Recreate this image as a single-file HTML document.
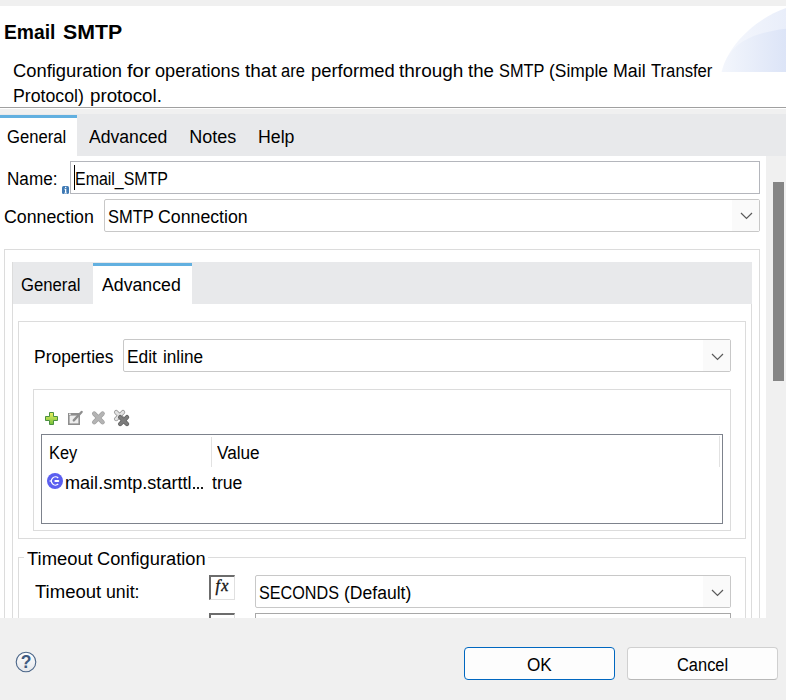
<!DOCTYPE html><html><head><meta charset="utf-8"><style>
html,body{margin:0;padding:0;}
body{width:786px;height:700px;position:relative;overflow:hidden;background:#fff;font-family:"Liberation Sans",sans-serif;}
.a{position:absolute;}
.t{position:absolute;white-space:nowrap;}
</style></head><body>
<div class="a" style="left:0px;top:0px;width:786px;height:6px;background:#f0f0f0"></div>
<svg class="a" style="left:700px;top:6px" width="86" height="67" viewBox="0 0 86 67"><defs><linearGradient id="g1" x1="0" y1="0" x2="1" y2="0"><stop offset="0" stop-color="#f6f8fd"/><stop offset="1" stop-color="#e9eefa"/></linearGradient><linearGradient id="g2" x1="0" y1="0" x2="1" y2="0"><stop offset="0" stop-color="#f3f6fc"/><stop offset="1" stop-color="#dce4f7"/></linearGradient></defs><path d="M21.5 66 C27 42 52 14 86 2 L86 66 Z" fill="url(#g1)"/><path d="M22 66 C28 38 50 27 86 22.7 L86 66 Z" fill="url(#g2)"/></svg>
<div class="t" style="left:4.10px;top:21.65px;font-size:20.5px;line-height:20.5px;font-weight:bold;color:#000;transform:scaleX(0.9409);transform-origin:0 0;">Email</div>
<div class="t" style="left:63.30px;top:21.65px;font-size:20.5px;line-height:20.5px;font-weight:bold;color:#000;transform:scaleX(1.0388);transform-origin:0 0;">SMTP</div>
<div class="t" style="left:12.70px;top:61.76px;font-size:18px;line-height:18px;color:#000;transform:scaleX(1.0187);transform-origin:0 0;">Configuration</div>
<div class="t" style="left:126.60px;top:61.76px;font-size:18px;line-height:18px;color:#000;transform:scaleX(1.1206);transform-origin:0 0;">for</div>
<div class="t" style="left:155.00px;top:61.76px;font-size:18px;line-height:18px;color:#000;transform:scaleX(1.0076);transform-origin:0 0;">operations</div>
<div class="t" style="left:244.60px;top:61.76px;font-size:18px;line-height:18px;color:#000;transform:scaleX(1.0546);transform-origin:0 0;">that</div>
<div class="t" style="left:280.60px;top:61.76px;font-size:18px;line-height:18px;color:#000;transform:scaleX(0.9150);transform-origin:0 0;">are</div>
<div class="t" style="left:310.60px;top:61.76px;font-size:18px;line-height:18px;color:#000;transform:scaleX(1.0210);transform-origin:0 0;">performed</div>
<div class="t" style="left:399.20px;top:61.76px;font-size:18px;line-height:18px;color:#000;transform:scaleX(1.0554);transform-origin:0 0;">through</div>
<div class="t" style="left:468.40px;top:61.76px;font-size:18px;line-height:18px;color:#000;transform:scaleX(1.0352);transform-origin:0 0;">the</div>
<div class="t" style="left:498.70px;top:61.76px;font-size:18px;line-height:18px;color:#000;transform:scaleX(0.9073);transform-origin:0 0;">SMTP</div>
<div class="t" style="left:548.50px;top:61.76px;font-size:18px;line-height:18px;color:#000;transform:scaleX(0.9669);transform-origin:0 0;">(Simple</div>
<div class="t" style="left:613.20px;top:61.76px;font-size:18px;line-height:18px;color:#000;transform:scaleX(0.9870);transform-origin:0 0;">Mail</div>
<div class="t" style="left:650.50px;top:61.76px;font-size:18px;line-height:18px;color:#000;transform:scaleX(0.9257);transform-origin:0 0;">Transfer</div>
<div class="t" style="left:13.30px;top:86.76px;font-size:18px;line-height:18px;color:#000;transform:scaleX(0.9847);transform-origin:0 0;">Protocol)</div>
<div class="t" style="left:90.40px;top:86.76px;font-size:18px;line-height:18px;color:#000;transform:scaleX(1.0416);transform-origin:0 0;">protocol.</div>
<div class="a" style="left:0px;top:107px;width:786px;height:1px;background:#a0a0a0"></div>
<div class="a" style="left:0px;top:109px;width:786px;height:5px;background:#f0f0f0"></div>
<div class="a" style="left:0px;top:114px;width:786px;height:42px;background:#e8e9eb"></div>
<div class="a" style="left:0px;top:115px;width:77px;height:41px;background:#fff"></div>
<div class="a" style="left:0px;top:115px;width:77px;height:3px;background:#62b0e0"></div>
<div class="t" style="left:7.20px;top:127.76px;font-size:18px;line-height:18px;color:#000;transform:scaleX(0.9238);transform-origin:0 0;">General</div>
<div class="t" style="left:88.50px;top:127.76px;font-size:18px;line-height:18px;color:#000;transform:scaleX(0.9775);transform-origin:0 0;">Advanced</div>
<div class="t" style="left:189.20px;top:127.76px;font-size:18px;line-height:18px;color:#000;">Notes</div>
<div class="t" style="left:258.20px;top:127.76px;font-size:18px;line-height:18px;color:#000;transform:scaleX(0.9840);transform-origin:0 0;">Help</div>
<div class="a" style="left:766px;top:156px;width:20px;height:462px;background:#f0f0f0"></div>
<div class="a" style="left:773px;top:182px;width:11px;height:199px;background:#858585"></div>
<div class="t" style="left:7.40px;top:169.76px;font-size:18px;line-height:18px;color:#000;transform:scaleX(0.9508);transform-origin:0 0;">Name:</div>
<div class="a" style="left:70px;top:161px;width:690px;height:33px;box-sizing:border-box;border:1px solid #b4b6bc;background:#fff;"></div>
<div class="a" style="left:74px;top:165px;width:1px;height:25px;background:#000"></div>
<div class="t" style="left:74.80px;top:169.76px;font-size:18px;line-height:18px;color:#000;transform:scaleX(0.8855);transform-origin:0 0;">Email_SMTP</div>
<svg class="a" style="left:62px;top:186px" width="7" height="8" viewBox="0 0 7 8"><rect x="0" y="0" width="7" height="8" rx="1.6" fill="#3f7ab5"/><rect x="3" y="0.8" width="1.3" height="1.2" fill="#fff"/><path d="M2.2 2.8 h2.1 v3.9 h0.8 v0.8 h-3 v-0.8 h0.9 v-3.1 h-0.8 z" fill="#fff"/></svg>
<div class="t" style="left:4.10px;top:207.76px;font-size:18px;line-height:18px;color:#000;transform:scaleX(0.9870);transform-origin:0 0;">Connection</div>
<div class="a" style="left:104px;top:199px;width:656px;height:33px;box-sizing:border-box;border:1px solid #c8c8c8;background:#fff;border-radius:2px;"></div>
<div class="a" style="left:732px;top:200px;width:27px;height:31px;background:#fafafa"></div>
<svg class="a" style="left:740px;top:212px" width="13" height="8" viewBox="0 0 13 8"><path d="M1 1 L6.5 6.5 L12 1" fill="none" stroke="#5a5a5a" stroke-width="1.2"/></svg>
<div class="t" style="left:107.70px;top:207.76px;font-size:18px;line-height:18px;color:#000;transform:scaleX(0.9153);transform-origin:0 0;">SMTP</div>
<div class="t" style="left:157.90px;top:207.76px;font-size:18px;line-height:18px;color:#000;transform:scaleX(0.9848);transform-origin:0 0;">Connection</div>
<div class="a" style="left:4px;top:249px;width:756px;height:552px;box-sizing:border-box;border:1px solid #dcdcdc;background:transparent;"></div>
<div class="a" style="left:12px;top:262px;width:740px;height:539px;box-sizing:border-box;border:1px solid #dcdcdc;background:transparent;"></div>
<div class="a" style="left:13px;top:262px;width:739px;height:42px;background:#e8e9eb"></div>
<div class="a" style="left:93px;top:263px;width:99px;height:41px;background:#fff"></div>
<div class="a" style="left:93px;top:263px;width:99px;height:3px;background:#62b0e0"></div>
<div class="t" style="left:21.20px;top:275.76px;font-size:18px;line-height:18px;color:#000;transform:scaleX(0.9270);transform-origin:0 0;">General</div>
<div class="t" style="left:102.20px;top:275.76px;font-size:18px;line-height:18px;color:#000;transform:scaleX(0.9838);transform-origin:0 0;">Advanced</div>
<div class="a" style="left:18px;top:321px;width:728px;height:218px;box-sizing:border-box;border:1px solid #dcdcdc;background:transparent;"></div>
<div class="t" style="left:33.50px;top:347.76px;font-size:18px;line-height:18px;color:#000;transform:scaleX(0.9686);transform-origin:0 0;">Properties</div>
<div class="a" style="left:123px;top:339px;width:608px;height:33px;box-sizing:border-box;border:1px solid #c8c8c8;background:#fff;border-radius:2px;"></div>
<div class="a" style="left:703px;top:340px;width:27px;height:31px;background:#fafafa"></div>
<svg class="a" style="left:711px;top:353px" width="13" height="8" viewBox="0 0 13 8"><path d="M1 1 L6.5 6.5 L12 1" fill="none" stroke="#5a5a5a" stroke-width="1.2"/></svg>
<div class="t" style="left:127.40px;top:347.76px;font-size:18px;line-height:18px;color:#000;transform:scaleX(0.9630);transform-origin:0 0;">Edit</div>
<div class="t" style="left:162.60px;top:347.76px;font-size:18px;line-height:18px;color:#000;transform:scaleX(0.9541);transform-origin:0 0;">inline</div>
<div class="a" style="left:33px;top:389px;width:698px;height:142px;box-sizing:border-box;border:1px solid #dcdcdc;background:transparent;"></div>
<svg class="a" style="left:40px;top:405px" width="95" height="25" viewBox="0 0 95 25">
<defs><linearGradient id="gp" x1="0" y1="0" x2="0" y2="1"><stop offset="0" stop-color="#eef060"/><stop offset="1" stop-color="#72c03a"/></linearGradient></defs>
<path d="M9.5 7.5 h4 v4 h4 v4 h-4 v4 h-4 v-4 h-4 v-4 h4 z" fill="url(#gp)" stroke="#4a9040" stroke-width="1"/>
<rect x="28.8" y="8.8" width="10.4" height="10.4" fill="#eeeeee" stroke="#8e8e8e" stroke-width="1.6"/>
<rect x="28" y="8" width="12" height="2.6" fill="#8e8e8e"/>
<rect x="29.2" y="8.6" width="1.4" height="1.4" fill="#fff"/>
<path d="M33.8 15.4 L41.6 7" stroke="#8e8e8e" stroke-width="2.4" stroke-linecap="round"/>
<path d="M54.2 8.6 L62.6 17.2 M62.6 8.6 L54.2 17.2" stroke="#a0a0a0" stroke-width="4.4" stroke-linecap="round"/>
<path d="M54.2 8.6 L62.6 17.2 M62.6 8.6 L54.2 17.2" stroke="#b4b4b4" stroke-width="3.0" stroke-linecap="round"/>
<path d="M76.2 7.2 L83 14 M83 7.2 L76.2 14" stroke="#8e8e8e" stroke-width="4.4" stroke-linecap="round"/>
<path d="M76.2 7.2 L83 14 M83 7.2 L76.2 14" stroke="#e2e2e2" stroke-width="3" stroke-linecap="round"/>
<path d="M80.2 12.2 L87 19 M87 12.2 L80.2 19" stroke="#606060" stroke-width="4.4" stroke-linecap="round"/>
<path d="M80.2 12.2 L87 19 M87 12.2 L80.2 19" stroke="#7c7c7c" stroke-width="3.0" stroke-linecap="round"/>
</svg>
<div class="a" style="left:41px;top:434px;width:682px;height:90px;box-sizing:border-box;border:1px solid #7d828c;background:#fff;"></div>
<div class="a" style="left:211px;top:437px;width:1px;height:30px;background:#e2e2e2"></div>
<div class="a" style="left:719px;top:436px;width:1px;height:31px;background:#e2e2e2"></div>
<div class="t" style="left:49.30px;top:443.76px;font-size:18px;line-height:18px;color:#000;transform:scaleX(0.9114);transform-origin:0 0;">Key</div>
<div class="t" style="left:217.40px;top:443.76px;font-size:18px;line-height:18px;color:#000;transform:scaleX(0.9546);transform-origin:0 0;">Value</div>
<svg class="a" style="left:47px;top:473px" width="16" height="16" viewBox="0 0 16 16"><circle cx="8" cy="8" r="8" fill="#5b5ff0"/><path d="M11.2 4.9 A4.1 4.1 0 1 0 11.2 11.1" fill="none" stroke="#fff" stroke-width="1.3"/><path d="M2.6 8 h2" stroke="#fff" stroke-width="1.2"/><path d="M8.4 8 h2.8" stroke="#fff" stroke-width="2.1" stroke-linecap="round"/></svg>
<div class="t" style="left:65.30px;top:473.76px;font-size:18px;line-height:18px;color:#000;transform:scaleX(1.0040);transform-origin:0 0;">mail.smtp.starttl</div>
<div class="a" style="left:193px;top:487px;width:2px;height:2px;background:#1a1a1a"></div>
<div class="a" style="left:197px;top:487px;width:2px;height:2px;background:#1a1a1a"></div>
<div class="a" style="left:201px;top:487px;width:2px;height:2px;background:#1a1a1a"></div>
<div class="t" style="left:212.20px;top:473.76px;font-size:18px;line-height:18px;color:#000;transform:scaleX(0.9791);transform-origin:0 0;">true</div>
<div class="a" style="left:18px;top:557px;width:728px;height:244px;box-sizing:border-box;border:1px solid #dcdcdc;background:transparent;"></div>
<div class="a" style="left:24px;top:550px;width:184px;height:21px;background:#fff"></div>
<div class="t" style="left:26.50px;top:549.76px;font-size:18px;line-height:18px;color:#000;transform:scaleX(1.0210);transform-origin:0 0;">Timeout</div>
<div class="t" style="left:97.00px;top:549.76px;font-size:18px;line-height:18px;color:#000;transform:scaleX(1.0140);transform-origin:0 0;">Configuration</div>
<div class="t" style="left:35.30px;top:582.76px;font-size:18px;line-height:18px;color:#000;transform:scaleX(1.0287);transform-origin:0 0;">Timeout</div>
<div class="t" style="left:105.90px;top:582.76px;font-size:18px;line-height:18px;color:#000;transform:scaleX(0.9847);transform-origin:0 0;">unit:</div>
<div class="a" style="left:209px;top:575px;width:26px;height:25px;box-sizing:border-box;border-top:2px solid #6c6c6c;border-left:2px solid #6c6c6c;border-right:1px solid #e0e0e0;border-bottom:1px solid #e0e0e0;background:#fff"></div>
<div class="t" style="left:215.5px;top:578px;font-family:'Liberation Serif',serif;font-style:italic;font-size:16px;line-height:15px;color:#111;letter-spacing:1.2px;-webkit-text-stroke:0.35px #111">fx</div>
<div class="a" style="left:255px;top:575px;width:476px;height:33px;box-sizing:border-box;border:1px solid #c8c8c8;background:#fff;border-radius:2px;"></div>
<div class="a" style="left:703px;top:576px;width:27px;height:31px;background:#fafafa"></div>
<svg class="a" style="left:711px;top:589px" width="13" height="8" viewBox="0 0 13 8"><path d="M1 1 L6.5 6.5 L12 1" fill="none" stroke="#5a5a5a" stroke-width="1.2"/></svg>
<div class="t" style="left:258.90px;top:583.76px;font-size:18px;line-height:18px;color:#000;transform:scaleX(0.8988);transform-origin:0 0;">SECONDS</div>
<div class="t" style="left:344.10px;top:583.76px;font-size:18px;line-height:18px;color:#000;transform:scaleX(0.9749);transform-origin:0 0;">(Default)</div>
<div class="a" style="left:209px;top:613px;width:26px;height:25px;box-sizing:border-box;border-top:2px solid #6c6c6c;border-left:2px solid #6c6c6c;border-right:1px solid #e0e0e0;background:#fff"></div>
<div class="a" style="left:255px;top:613px;width:476px;height:38px;box-sizing:border-box;border:1px solid #a8a8a8;background:#fff;"></div>
<div class="a" style="left:0px;top:618px;width:786px;height:82px;background:#f0f0f0"></div>
<svg class="a" style="left:15px;top:651px" width="22" height="22" viewBox="0 0 22 22"><defs><linearGradient id="hg" x1="0" y1="0" x2="0" y2="1"><stop offset="0" stop-color="#fff"/><stop offset="1" stop-color="#e4e6ea"/></linearGradient></defs><circle cx="11" cy="11" r="9.8" fill="url(#hg)" stroke="#4a6588" stroke-width="1.1"/><text x="11.2" y="17.2" text-anchor="middle" font-family="Liberation Sans" font-weight="bold" font-size="17.5" fill="#3f5a80">?</text></svg>
<div class="a" style="left:464px;top:647px;width:151px;height:33px;box-sizing:border-box;border:1px solid #0067c0;border-radius:4px;background:#fdfdfd"></div>
<div class="a" style="left:627px;top:647px;width:151px;height:33px;box-sizing:border-box;border:1px solid #d0d0d0;border-bottom-color:#b8b8b8;border-radius:4px;background:#fdfdfd"></div>
<div class="t" style="left:526.80px;top:655.76px;font-size:18px;line-height:18px;color:#000;transform:scaleX(0.9535);transform-origin:0 0;">OK</div>
<div class="t" style="left:676.90px;top:655.76px;font-size:18px;line-height:18px;color:#000;transform:scaleX(0.9131);transform-origin:0 0;">Cancel</div>
</body></html>
